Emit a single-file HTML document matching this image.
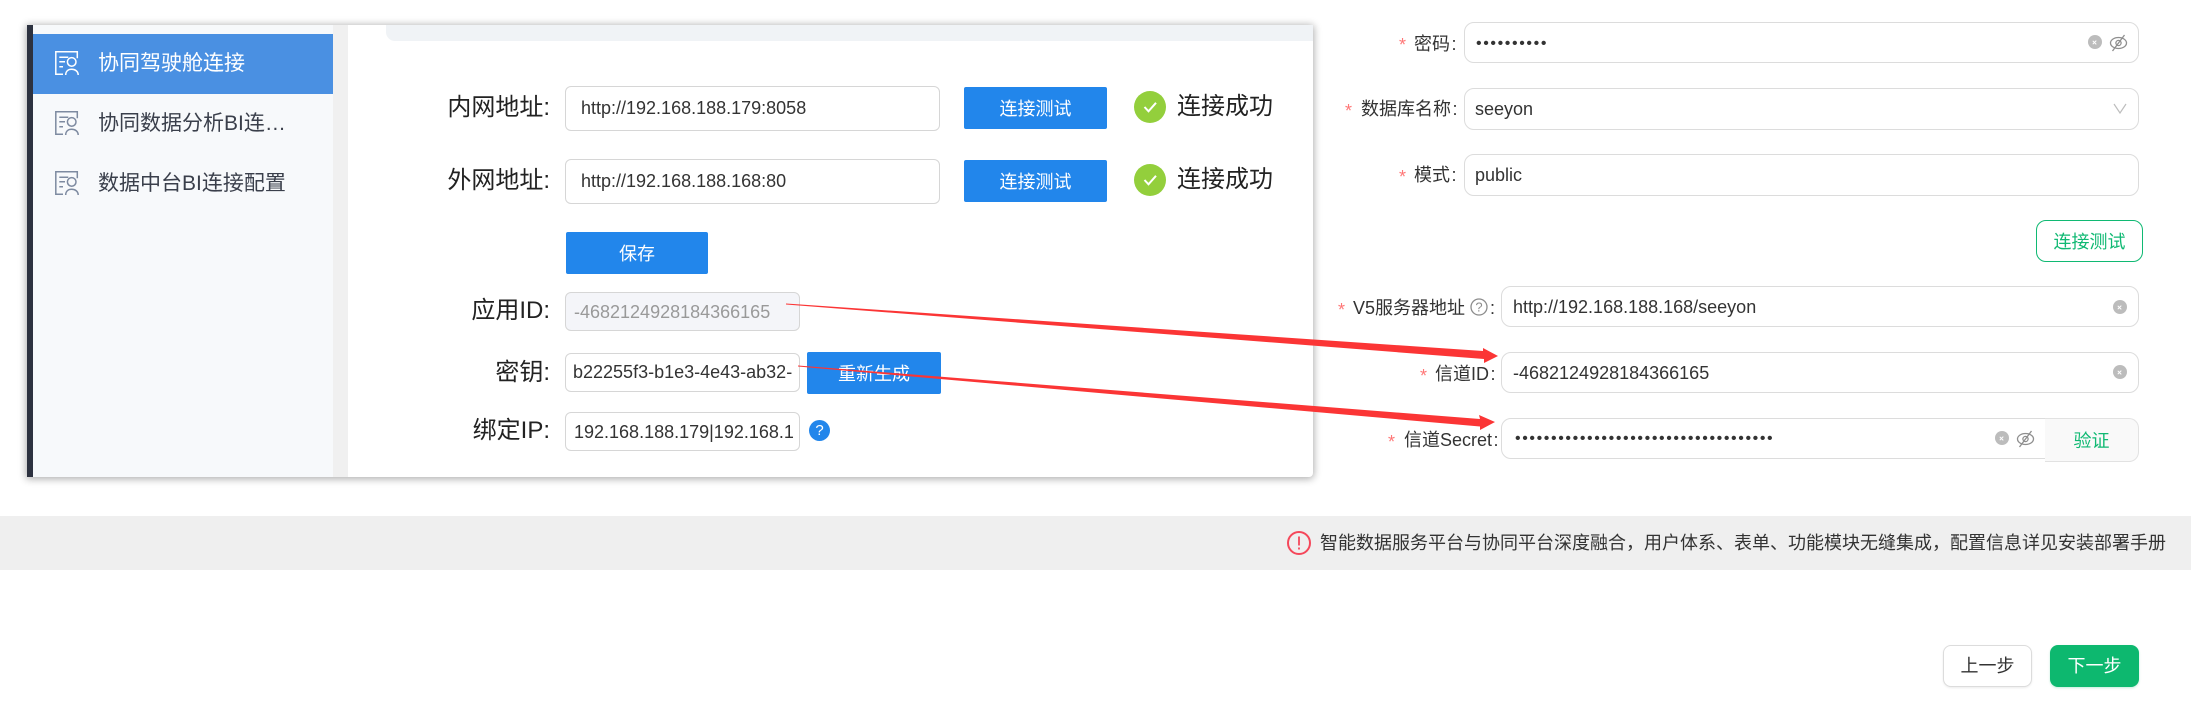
<!DOCTYPE html>
<html lang="zh-CN">
<head>
<meta charset="utf-8">
<title>配置</title>
<style>
html,body{margin:0;padding:0;background:#fff;}
body{width:2191px;height:706px;position:relative;overflow:hidden;font-family:"Liberation Sans","Noto Sans CJK SC",sans-serif;color:#333;}
.a{position:absolute;box-sizing:border-box;}
.t{position:absolute;white-space:nowrap;line-height:1;}
.panel{left:27px;top:25px;width:1286px;height:452px;background:#fff;box-shadow:0 1px 8px 1px rgba(0,0,0,.32);border-radius:0 2px 4px 0;}
.lb{position:absolute;right:1641px;font-size:24px;line-height:30px;height:30px;color:#222;white-space:nowrap;}
.in{position:absolute;box-sizing:border-box;background:#fff;border:1px solid #d6d6d6;border-radius:6px;font-size:18px;color:#333;white-space:nowrap;overflow:hidden;}
.btn{position:absolute;background:#2286eb;color:#fff;font-size:18px;text-align:center;border-radius:2px;}
.rl{position:absolute;font-size:18px;line-height:24px;color:#333;white-space:nowrap;}
.rl span{margin-left:1.5px;}
.st{position:absolute;font-size:18px;line-height:24px;color:#f77;white-space:nowrap;}
.rin{position:absolute;box-sizing:border-box;background:#fff;border:1px solid #dcdcdc;border-radius:10px;font-size:18px;color:#333;white-space:nowrap;}
.dots{font-size:16px;letter-spacing:1.6px;}
.clr{position:absolute;width:14px;height:14px;border-radius:50%;background:#bcbcbc;}
.clr:before,.clr:after{content:"";position:absolute;left:6.4px;top:4.5px;width:1.2px;height:5px;background:#fff;transform:rotate(45deg);}
.clr:after{transform:rotate(-45deg);}
</style>
</head>
<body>
<div class="a panel"></div>
<div class="a" style="left:27px;top:25px;width:6px;height:452px;background:#2d3240;"></div>
<div class="a" style="left:33px;top:25px;width:300px;height:452px;background:#f7f9fb;"></div>
<div class="a" style="left:333px;top:25px;width:15px;height:452px;background:#f0f0f0;"></div>
<div class="a" style="left:33px;top:34px;width:300px;height:60px;background:#4a90e2;"></div>
<div class="a" style="left:386px;top:25px;width:927px;height:16px;background:#f0f3f6;border-radius:0 0 0 9px;"></div>

<svg class="a" style="left:55px;top:51px" width="25" height="25" viewBox="0 0 25 25" fill="none" stroke="#fff" stroke-width="1.500"><path d="M8 23.200H.8V.8h21.500v6.500"/><path d="M4.300 6.300h9M4.300 10.700h5.700M4.300 15.700h3.700"/><circle cx="16.700" cy="10.900" r="4.300"/><path d="M10.700 24c0-3.800 2.600-5.700 6-5.700s6.500 1.900 6.500 5.700"/></svg>
<svg class="a" style="left:55px;top:111px" width="25" height="25" viewBox="0 0 25 25" fill="none" stroke="#7d8aa0" stroke-width="1.500"><path d="M8 23.200H.8V.8h21.500v6.500"/><path d="M4.300 6.300h9M4.300 10.700h5.700M4.300 15.700h3.700"/><circle cx="16.700" cy="10.900" r="4.300"/><path d="M10.700 24c0-3.800 2.600-5.700 6-5.700s6.500 1.900 6.500 5.700"/></svg>
<svg class="a" style="left:55px;top:171px" width="25" height="25" viewBox="0 0 25 25" fill="none" stroke="#7d8aa0" stroke-width="1.500"><path d="M8 23.200H.8V.8h21.500v6.500"/><path d="M4.300 6.300h9M4.300 10.700h5.700M4.300 15.700h3.700"/><circle cx="16.700" cy="10.900" r="4.300"/><path d="M10.700 24c0-3.800 2.600-5.700 6-5.700s6.500 1.900 6.500 5.700"/></svg>

<div class="t" style="left:98px;top:53px;font-size:21px;color:#fff;">协同驾驶舱连接</div>
<div class="t" style="left:98px;top:113px;font-size:21px;color:#3a3f4b;">协同数据分析BI连…</div>
<div class="t" style="left:98px;top:173px;font-size:21px;color:#3a3f4b;">数据中台BI连接配置</div>

<div class="lb" style="top:93px;">内网地址:</div>
<div class="lb" style="top:166px;">外网地址:</div>
<div class="lb" style="top:296px;">应用ID:</div>
<div class="lb" style="top:358px;">密钥:</div>
<div class="lb" style="top:416px;">绑定IP:</div>

<div class="in" style="left:565px;top:86px;width:375px;height:45px;line-height:43px;padding-left:15px;">http://192.168.188.179:8058</div>
<div class="in" style="left:565px;top:159px;width:375px;height:45px;line-height:43px;padding-left:15px;">http://192.168.188.168:80</div>
<div class="btn" style="left:964px;top:87px;width:143px;height:42px;line-height:44px;">连接测试</div>
<div class="btn" style="left:964px;top:160px;width:143px;height:42px;line-height:44px;">连接测试</div>

<svg class="a" style="left:1134px;top:91px" width="32" height="32" viewBox="0 0 32 32"><circle cx="16" cy="16" r="16" fill="#93cf3c"/><path d="M10.500 16l4 4.300 7.500-8.500" fill="none" stroke="#fff" stroke-width="2"/></svg>
<svg class="a" style="left:1134px;top:164px" width="32" height="32" viewBox="0 0 32 32"><circle cx="16" cy="16" r="16" fill="#93cf3c"/><path d="M10.500 16l4 4.300 7.500-8.500" fill="none" stroke="#fff" stroke-width="2"/></svg>
<div class="t" style="left:1177px;top:95px;font-size:24px;color:#222;">连接成功</div>
<div class="t" style="left:1177px;top:168px;font-size:24px;color:#222;">连接成功</div>

<div class="btn" style="left:566px;top:232px;width:142px;height:42px;line-height:44px;">保存</div>

<div class="in" style="left:565px;top:292px;width:235px;height:39px;line-height:38px;padding-left:8px;background:#f4f5f9;color:#999;">-4682124928184366165</div>
<div class="in" style="left:565px;top:353px;width:235px;height:39px;line-height:37px;padding-left:7px;">b22255f3-b1e3-4e43-ab32-</div>
<div class="btn" style="left:807px;top:352px;width:134px;height:42px;line-height:44px;">重新生成</div>
<div class="in" style="left:565px;top:412px;width:235px;height:39px;line-height:38px;padding-left:8px;">192.168.188.179|192.168.1</div>
<div class="a" style="left:809px;top:420px;width:21px;height:21px;border-radius:50%;background:#2286eb;color:#fff;font-size:15px;line-height:21px;text-align:center;">?</div>

<!-- right form -->
<div class="st" style="left:1399px;top:33px;">*</div>
<div class="rl" style="left:1414px;top:32px;">密码<span>:</span></div>
<div class="rin dots" style="left:1464px;top:22px;width:675px;height:41px;line-height:42px;padding-left:11px;">••••••••••</div>
<div class="clr" style="left:2088px;top:35px;"></div>
<svg class="a" style="left:2109px;top:34px" width="19" height="18" viewBox="0 0 19 18" fill="none" stroke="#8f8f8f" stroke-width="1.300"><ellipse cx="9.500" cy="9" rx="8" ry="5.500"/><circle cx="9.500" cy="9" r="2.600"/><path d="M15.500 1L3.500 17"/></svg>

<div class="st" style="left:1345px;top:99px;">*</div>
<div class="rl" style="left:1361px;top:97px;">数据库名称<span>:</span></div>
<div class="rin" style="left:1464px;top:88px;width:675px;height:42px;line-height:40px;padding-left:10px;">seeyon</div>
<svg class="a" style="left:2113px;top:103px" width="14" height="11" viewBox="0 0 14 11" fill="none" stroke="#bdbdbd" stroke-width="1.200"><path d="M1 1l6 9 6-9"/></svg>

<div class="st" style="left:1399px;top:165px;">*</div>
<div class="rl" style="left:1414px;top:163px;">模式<span>:</span></div>
<div class="rin" style="left:1464px;top:154px;width:675px;height:42px;line-height:40px;padding-left:10px;">public</div>

<div class="a" style="left:2036px;top:220px;width:107px;height:42px;border:1px solid #10b973;border-radius:10px;color:#10b973;font-size:18px;line-height:42px;text-align:center;background:#fff;">连接测试</div>

<div class="st" style="left:1338px;top:298px;">*</div>
<div class="rl" style="left:1353px;top:296px;">V5服务器地址</div>
<svg class="a" style="left:1470px;top:298px" width="18" height="18" viewBox="0 0 18 18"><circle cx="9" cy="9" r="8" fill="none" stroke="#8c8c8c" stroke-width="1.300"/><text x="9" y="13.500" font-size="13" text-anchor="middle" fill="#8c8c8c" font-family="Liberation Sans, sans-serif">?</text></svg>
<div class="rl" style="left:1490px;top:296px;">:</div>
<div class="rin" style="left:1501px;top:286px;width:638px;height:41px;line-height:41px;padding-left:11px;">http://192.168.188.168/seeyon</div>
<div class="clr" style="left:2113px;top:300px;"></div>

<div class="st" style="left:1420px;top:364px;">*</div>
<div class="rl" style="left:1435px;top:362px;">信道ID<span>:</span></div>
<div class="rin" style="left:1501px;top:352px;width:638px;height:41px;line-height:41px;padding-left:11px;">-4682124928184366165</div>
<div class="clr" style="left:2113px;top:365px;"></div>

<div class="st" style="left:1388px;top:430px;">*</div>
<div class="rl" style="left:1404px;top:428px;">信道Secret<span>:</span></div>
<div class="rin dots" style="left:1501px;top:418px;width:545px;height:41px;line-height:40px;padding-left:13px;border-radius:10px 0 0 10px;overflow:hidden;">••••••••••••••••••••••••••••••••••••</div>
<div class="a" style="left:2045px;top:418px;width:94px;height:44px;background:#f9f9f9;border:1px solid #e2e2e2;border-left:0;border-radius:0 10px 10px 0;color:#10b973;font-size:18px;line-height:44px;text-align:center;">验证</div>
<div class="clr" style="left:1995px;top:431px;"></div>
<svg class="a" style="left:2016px;top:430px" width="19" height="18" viewBox="0 0 19 18" fill="none" stroke="#8f8f8f" stroke-width="1.300"><ellipse cx="9.500" cy="9" rx="8" ry="5.500"/><circle cx="9.500" cy="9" r="2.600"/><path d="M15.500 1L3.500 17"/></svg>

<!-- arrows -->
<svg class="a" style="left:0;top:0" width="2191" height="706" viewBox="0 0 2191 706">
<polygon fill="#fb3535" points="786,303.500 1483,351 1483,348 1498,356 1484,363 1484,359 786,304.500"/>
<polygon fill="#fb3535" points="798,365.500 1480,419 1479,415 1495,422 1480,430 1480,426.500 798,366.500"/>
</svg>

<!-- notice bar -->
<div class="a" style="left:0;top:516px;width:2191px;height:54px;background:#efefef;"></div>
<svg class="a" style="left:1287px;top:531px" width="24" height="24" viewBox="0 0 24 24"><circle cx="12" cy="12" r="11" fill="none" stroke="#f5475a" stroke-width="2"/><path d="M12 5.500v9M12 16.500v2" stroke="#f5475a" stroke-width="1.800"/></svg>
<div class="t" style="left:1320px;top:534px;font-size:18px;color:#333;">智能数据服务平台与协同平台深度融合，用户体系、表单、功能模块无缝集成，配置信息详见安装部署手册</div>

<div class="a" style="left:1943px;top:645px;width:89px;height:42px;background:#fff;border:1px solid #dcdcdc;border-radius:8px;font-size:18px;line-height:40px;text-align:center;color:#333;box-shadow:0 1px 2px rgba(0,0,0,.08);">上一步</div>
<div class="a" style="left:2050px;top:645px;width:89px;height:42px;background:#0db86f;border-radius:8px;font-size:18px;line-height:42px;text-align:center;color:#fff;box-shadow:0 1px 2px rgba(13,184,111,.25);">下一步</div>
</body>
</html>
